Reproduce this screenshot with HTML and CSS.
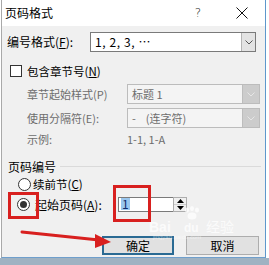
FILE: index.html
```html
<!DOCTYPE html>
<html lang="zh-CN">
<head>
<meta charset="utf-8">
<link rel="stylesheet" href="styles.css">
</head>
<body>
<div class="stage">
  <div class="win">
    <div class="titlebar">
      <span class="title">页码格式</span>
      <span class="help">?</span>
      <svg class="close" width="12" height="12" viewBox="0 0 12 12"><path d="M0.5 0.5 L11.5 11.5 M11.5 0.5 L0.5 11.5" stroke="#111" stroke-width="1" fill="none"/></svg>
    </div>
    <div class="body">
      <div class="row r1">
        <span class="lbl1">编号格式(<u>F</u>):</span>
        <div class="combo c1">
          <span class="val">1, 2, 3, …</span>
          <span class="arrow"><svg width="8" height="5" viewBox="0 0 8 5"><path d="M0.5 0.5 L4 4 L7.5 0.5" stroke="#555" fill="none"/></svg></span>
        </div>
      </div>
      <div class="row r2">
        <span class="chk"></span>
        <span class="chktext">包含章节号(<u>N</u>)</span>
      </div>
      <div class="row dis r3">
        <span class="lbl2">章节起始样式(P)</span>
        <div class="combo dcombo">
          <span class="val">标题 1</span>
          <span class="arrow"><svg width="8" height="5" viewBox="0 0 8 5"><path d="M0.5 0.5 L4 4 L7.5 0.5" stroke="#e6e6e6" fill="none"/></svg></span>
        </div>
      </div>
      <div class="row dis r4">
        <span class="lbl2">使用分隔符(E):</span>
        <div class="combo dcombo">
          <span class="val">-&nbsp;&nbsp;&nbsp;&nbsp;(连字符)</span>
          <span class="arrow"><svg width="8" height="5" viewBox="0 0 8 5"><path d="M0.5 0.5 L4 4 L7.5 0.5" stroke="#e6e6e6" fill="none"/></svg></span>
        </div>
      </div>
      <div class="row dis r5">
        <span class="lbl2">示例:</span>
        <span class="ex">1-1, 1-A</span>
      </div>
      <div class="group">
        <span class="gtitle">页码编号</span>
        <span class="sep"></span>
      </div>
      <div class="row radio rr1">
        <span class="rb"></span>
        <span class="rtext1">续前节(<u>C</u>)</span>
      </div>
      <div class="row radio rr2">
        <span class="rb on"></span>
        <span class="rtext2">起始页码(<u>A</u>):</span>
        <div class="input"><span class="sel">1</span></div>
        <div class="spin">
          <span class="sp"><svg width="7" height="4" viewBox="0 0 7 4"><path d="M0 4 L3.5 0 L7 4 Z" fill="#000"/></svg></span>
          <span class="sp"><svg width="7" height="4" viewBox="0 0 7 4"><path d="M0 0 L3.5 4 L7 0 Z" fill="#000"/></svg></span>
        </div>
      </div>
      <div class="btns">
        <span class="btn ok">确定</span>
        <span class="btn cancel">取消</span>
      </div>
    </div>
  </div>
  <div class="taskbar"></div>

  <div class="watermark">
    <span class="wm-big">Bai</span>
    <svg class="wm-paw" width="18" height="14" viewBox="0 0 18 14">
      <ellipse cx="4" cy="4" rx="2" ry="2.5" fill="rgba(255,255,255,0.75)"/>
      <ellipse cx="9" cy="2.5" rx="2" ry="2.5" fill="rgba(255,255,255,0.75)"/>
      <ellipse cx="14" cy="4" rx="2" ry="2.5" fill="rgba(255,255,255,0.75)"/>
      <ellipse cx="9" cy="10" rx="4.5" ry="3.5" fill="rgba(255,255,255,0.75)"/>
    </svg>
    <span class="wm-du">du</span><span class="wm-cn">经验</span>
    <span class="wm-url">jingyan.baidu.com</span>
  </div>

  <svg class="marks" width="269" height="265" viewBox="0 0 269 265">
    <rect x="9.5" y="193.5" width="28" height="24" fill="none" stroke="#d8201f" stroke-width="3"/>
    <rect x="114.5" y="186.5" width="35" height="34" fill="none" stroke="#d8201f" stroke-width="3"/>
    <line x1="22" y1="232" x2="99" y2="240" stroke="#d8201f" stroke-width="3" stroke-linecap="round"/>
    <polygon points="111,242 95,234 95,248" fill="#d8201f"/>
  </svg>
</div>
</body>
</html>
```
FILE: styles.css
```css
* { box-sizing: border-box; }
html, body { margin: 0; padding: 0; }
body {
  width: 269px;
  height: 265px;
  overflow: hidden;
  background: #ffffff;
  font-family: "Noto Sans CJK SC", "Noto Sans", sans-serif;
  font-size: 12px;
  color: #000;
}
u { text-decoration: underline; text-underline-offset: 1px; }

.stage { position: relative; width: 269px; height: 265px; }

.win {
  margin-left: 1px;
  width: 265px;
  height: 258px;
  border-left: 1px solid #a9a9a9;
  border-right: 1px solid #5f97cc;
  border-bottom: 1px solid #6f9fcc;
  background: #f0f0f0;
}

.titlebar {
  height: 26px;
  background: #ffffff;
  display: flex;
  align-items: center;
}
.title { margin-left: 3px; font-size: 12px; line-height: 14px; }
.help {
  margin-left: auto;
  width: 14px;
  text-align: center;
  font-family: "DejaVu Sans", sans-serif;
  font-size: 12px;
  line-height: 14px;
  font-weight: 300;
  color: #222;
}
.close { margin-left: 31px; margin-right: 17px; }

.body { padding-top: 6px; }
.row { display: flex; align-items: center; }

.r1 { height: 20px; margin-left: 5px; }
.lbl1 { width: 83px; line-height: 20px; font-size: 12px; }
.combo {
  display: flex;
  height: 20px;
  border: 1px solid #7a7a7a;
  background: #fff;
}
.c1 { width: 166px; }
.combo .val {
  flex: 1;
  padding-left: 4px;
  line-height: 18px;
  font-size: 12px;
  white-space: nowrap;
  overflow: hidden;
}
.c1 .val { letter-spacing: 0.6px; }
.combo .arrow {
  width: 14px;
  display: flex;
  align-items: center;
  justify-content: center;
  background: #e3e3e3;
  border-left: 1px solid #b4b4b4;
}

.r2 { height: 21px; margin-top: 8px; }
.chk {
  margin-left: 8px;
  width: 12px;
  height: 12px;
  border: 1px solid #333;
  background: #fff;
}
.chktext { margin-left: 5px; font-size: 11.5px; }

.dis { color: #6d6d6d; padding-left: 25px; }
.lbl2 { width: 100px; font-size: 11px; white-space: nowrap; }
.r3 { height: 20px; margin-top: 3px; }
.r4 { height: 20px; margin-top: 4px; }
.r5 { height: 18px; margin-top: 2px; }
.dcombo {
  width: 133px;
  border-color: #bcbcbc;
  background: #f4f4f4;
}
.dcombo .val { font-size: 11px; color: #6d6d6d; }
.dcombo .arrow { width: 17px; background: #cccccc; border-left: 1px solid #bdbdbd; }
.ex { font-size: 11px; }

.group {
  display: flex;
  align-items: center;
  height: 18px;
  margin-top: 9px;
  margin-left: 6px;
}
.gtitle { font-size: 12px; }
.sep {
  flex: 1;
  height: 1px;
  background: #dadada;
  margin-left: 4px;
  margin-right: 4px;
}

.radio { height: 16px; }
.rr1 { margin-top: 1px; }
.rr2 { margin-top: 4px; }
.rb {
  width: 13px;
  height: 13px;
  border: 1px solid #333;
  border-radius: 50%;
  background: #fff;
  display: flex;
  align-items: center;
  justify-content: center;
}
.rr1 .rb { margin-left: 16px; }
.rr2 .rb { margin-left: 15px; }
.rb.on::after {
  content: "";
  width: 7px;
  height: 7px;
  border-radius: 50%;
  background: #333;
}
.rtext1 { margin-left: 2px; font-size: 11.5px; }
.rtext2 { margin-left: 5px; width: 83px; font-size: 12px; white-space: nowrap; }
.input {
  width: 55px;
  height: 15px;
  border: 1px solid #7a7a7a;
  border-right: none;
  background: #fff;
  display: flex;
  align-items: center;
  padding-left: 2px;
}
.sel {
  background: #99c6ee;
  color: #102a6a;
  font-size: 12px;
  line-height: 12px;
  padding: 0 1px;
}
.spin {
  width: 14px;
  height: 15px;
  border: 1px solid #adadad;
  background: #f0f0f0;
  display: flex;
  flex-direction: column;
}
.sp {
  flex: 1;
  display: flex;
  align-items: center;
  justify-content: center;
}
.sp + .sp { border-top: 1px solid #d0d0d0; }

.btns {
  display: flex;
  margin-top: 24px;
  margin-left: 100px;
}
.btn {
  height: 19px;
  display: flex;
  align-items: center;
  justify-content: center;
  background: #e1e1e1;
  font-size: 12px;
  line-height: 12px;
}
.ok { width: 72px; border: 2px solid #2a6a93; }
.cancel { width: 73px; margin-left: 12px; border: 1px solid #adadad; }

.taskbar {
  height: 7px;
  background: #9fb2c2;
}

.watermark {
  position: absolute;
  left: 149px;
  top: 212px;
  width: 100px;
  height: 28px;
  color: rgba(255, 255, 255, 0.75);
  font-family: "Liberation Sans", sans-serif;
  pointer-events: none;
}
.watermark span { position: absolute; line-height: 1; }
.wm-big { top: 7.5px; left: 0; font-size: 14px; font-weight: bold; }
.wm-paw { position: absolute; top: -6px; left: 34px; }
.wm-du { top: 9.5px; left: 35px; font-size: 12px; font-weight: bold; }
.wm-cn { top: 7px; left: 57px; font-family: "Noto Sans CJK SC", sans-serif; font-size: 14px; }
.wm-url { top: 21.5px; left: 4px; font-size: 6px; color: rgba(255,255,255,0.5); }

.marks { position: absolute; left: 0; top: 0; pointer-events: none; }
```
